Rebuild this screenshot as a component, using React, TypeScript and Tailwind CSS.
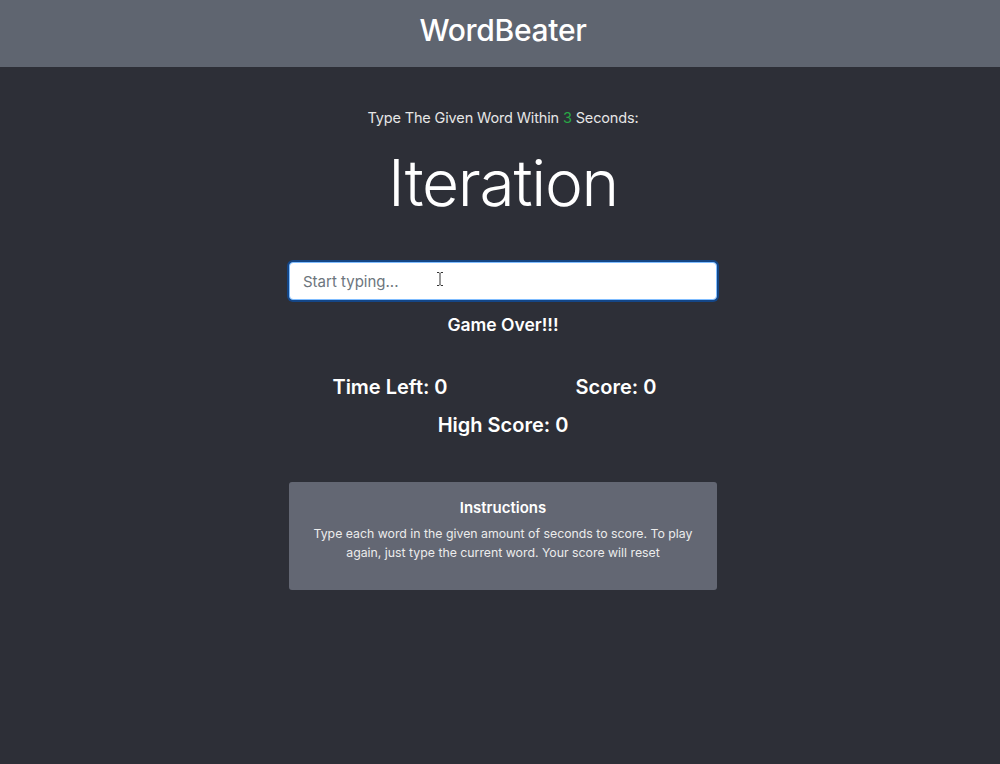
import { useState } from "react";

const FONT = "font-['Inter','Helvetica_Neue','Liberation_Sans',sans-serif]";

function IBeam() {
  return (
    <svg
      className="pointer-events-none absolute left-[147px] top-[9px]"
      width="8"
      height="16"
      viewBox="0 0 8 16"
      aria-hidden="true"
    >
      <path d="M1 1.5h2l1 1 1-1h2M4 2.5v11M1 14.5h2l1-1 1 1h2" fill="none" stroke="#fff" strokeWidth="2.4" />
      <path d="M1 1.5h2l1 1 1-1h2M4 2.5v11M1 14.5h2l1-1 1 1h2" fill="none" stroke="#333" strokeWidth="1" />
    </svg>
  );
}

export default function App() {
  const [value, setValue] = useState("");

  return (
    <div className={`${FONT} min-h-[764px] bg-[#2d2f37] text-white`}>
      {/* 상단 바 */}
      <header className="flex h-[67px] items-start justify-center bg-[#5f6570] pl-[6px] pt-[11px]">
        <h1 className="text-[30px] font-medium leading-[38px] tracking-[-0.01em] text-white">WordBeater</h1>
      </header>

      <div className="flex justify-center pl-[6px]">
        <main className="flex w-[428px] flex-col items-center pt-[40px]">
          <p className="text-[14.5px] leading-[22px] text-[#e6e6e6] tracking-[-0.01em]">
            Type The Given Word Within <span className="text-[#28a745]">3</span> Seconds:
          </p>

          <h2 className="mt-[12px] text-[64px] font-light leading-[84px] tracking-[-0.02em] text-white">
            Iteration
          </h2>

          <div className="relative mt-[37px] w-full">
            <input
              type="text"
              value={value}
              onChange={(e) => setValue(e.target.value)}
              placeholder="Start typing..."
              className="h-[38px] w-full rounded-[4px] border border-[#80bdff] bg-white px-[13px] text-[15px] text-[#495057] shadow-[0_0_0_2px_rgba(0,90,200,0.55)] outline-none placeholder:text-[#6c757d]"
            />
            <IBeam />
          </div>

          <h4 className="mt-[13px] text-[17.5px] font-semibold leading-[24px]">Game Over!!!</h4>

          <div className="mt-[37px] grid w-full grid-cols-2">
            <h3 className="-translate-x-[6px] text-center text-[20px] font-semibold leading-[26px]">Time Left: 0</h3>
            <h3 className="translate-x-[6px] text-center text-[20px] font-semibold leading-[26px]">Score: 0</h3>
          </div>
          <h3 className="mt-[12px] text-[20px] font-semibold leading-[26px]">High Score: 0</h3>

          <section className="mt-[44px] flex h-[108px] w-full flex-col items-center rounded-[3px] bg-[#636773] px-[12px] pt-[16px] text-center">
            <h5 className="text-[15px] font-semibold leading-[20px]">Instructions</h5>
            <p className="mt-[6px] text-[12.3px] leading-[19px] text-[#ececec]">
              Type each word in the given amount of seconds to score. To play again, just type the current word. Your score will reset
            </p>
          </section>
        </main>
      </div>
    </div>
  );
}
